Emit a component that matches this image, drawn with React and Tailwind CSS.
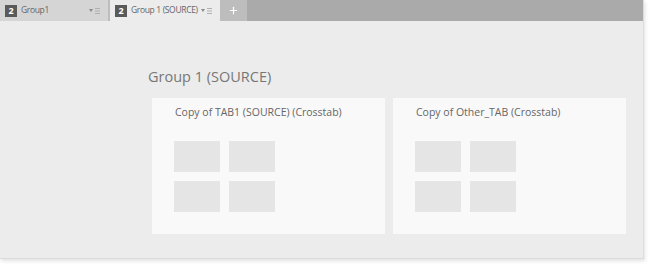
import { Plus } from "lucide-react";

const font = { fontFamily: '"Open Sans", "Noto Sans", sans-serif' };

function Badge() {
  return (
    <span className="flex h-[12px] w-[12px] shrink-0 items-center justify-center bg-[#5a5a5a] text-[9px] font-bold leading-none text-white">
      2
    </span>
  );
}

function MenuGlyph() {
  return (
    <span className="flex shrink-0 items-center gap-[2px]">
      <svg width="4" height="3" viewBox="0 0 4 3">
        <path d="M0 0h4L2 3z" fill="#8a8a8a" />
      </svg>
      <svg width="5" height="6" viewBox="0 0 5 6">
        <path d="M0 0.5h5M0 3h5M0 5.5h5" stroke="#b0b0b0" strokeWidth="1" />
      </svg>
    </span>
  );
}

function Tab({ label, active, width }) {
  return (
    <div
      className={`flex h-[21px] items-center pl-[5px] pr-[8px] ${width} ${
        active ? "bg-[#ececec]" : "bg-[#d5d5d5]"
      }`}
    >
      <Badge />
      <span className="ml-[4px] flex-1 whitespace-nowrap text-[8.5px] tracking-[-0.35px] text-[#666]">
        {label}
      </span>
      <MenuGlyph />
    </div>
  );
}

function Placeholder() {
  return <div className="h-[31px] w-[46px] bg-[#e5e5e5]" />;
}

function Card({ title }) {
  return (
    <div className="h-[136px] w-[233px] bg-[#f9f9f9] pl-[22px] pt-[7px]">
      <p className="pl-[1px] text-[10.5px] leading-[14px] text-[#666]">{title}</p>
      <div className="mt-[22px] grid w-max grid-cols-2 gap-[9px]">
        <Placeholder />
        <Placeholder />
        <Placeholder />
        <Placeholder />
      </div>
    </div>
  );
}

export default function App() {
  return (
    <div className="h-[265px] w-[650px] bg-white" style={font}>
      <div className="h-[259px] w-[644px] border-r border-b border-[#dcdcdc] bg-[#ececec] shadow-[1px_2px_4px_rgba(0,0,0,0.12)]">
        <div className="flex h-[21px] bg-[#aaaaaa]">
          <Tab label="Group1" width="w-[108px]" />
          <div className="w-[2px] bg-[#bdbdbd]" />
          <Tab label="Group 1 (SOURCE)" active width="w-[110px]" />
          <div className="flex w-[27px] items-center justify-center bg-[#bdbdbd]">
            <Plus size={11} strokeWidth={2.5} className="text-white" />
          </div>
        </div>
        <div className="pt-[46px]">
          <h1 className="pl-[148px] text-[14.5px] leading-[20px] text-[#777]">
            Group 1 (SOURCE)
          </h1>
          <div className="mt-[11px] flex gap-[8px] pl-[152px]">
            <Card title="Copy of TAB1 (SOURCE) (Crosstab)" />
            <Card title="Copy of Other_TAB (Crosstab)" />
          </div>
        </div>
      </div>
    </div>
  );
}
